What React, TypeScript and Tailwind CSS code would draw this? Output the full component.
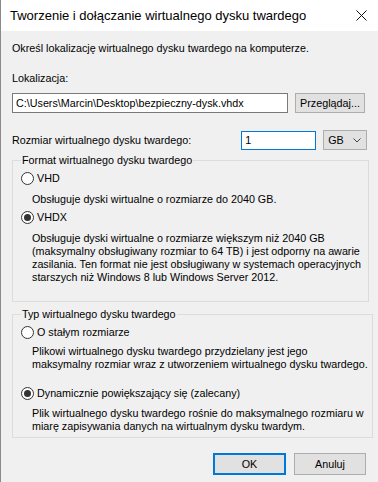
import React, { useState } from 'react';

const font = { fontFamily: '"Liberation Sans", Arial, sans-serif' };

// Classic Windows radio button
const Radio = ({ checked, label, onSelect }: { checked: boolean; label: string; onSelect: () => void }) => (
  <button type="button" onClick={onSelect} className="flex items-center h-[15px] text-left">
    <span className="w-[13px] h-[13px] rounded-full border border-[#333333] bg-white flex items-center justify-center shrink-0">
      {checked && <span className="w-[7px] h-[7px] rounded-full bg-[#333333]" />}
    </span>
    <span className="ml-[3px]">{label}</span>
  </button>
);

const GroupBox = ({ title, className, children }: { title: string; className: string; children: React.ReactNode }) => (
  <fieldset className={`border border-[#dcdcdc] pl-[8px] pr-1 ${className}`}>
    <legend className="px-[1px] leading-[15px]">{title}</legend>
    {children}
  </fieldset>
);

const App = () => {
  const [format, setFormat] = useState<'vhd' | 'vhdx'>('vhdx');
  const [type, setType] = useState<'fixed' | 'dynamic'>('dynamic');
  const [path, setPath] = useState('C:\\Users\\Marcin\\Desktop\\bezpieczny-dysk.vhdx');
  const [size, setSize] = useState('1');

  return (
    <div style={font} className="w-[378px] h-[482px] bg-[#f0f0f0] border-l border-[#8a8a8a] text-[10.75px] text-black overflow-hidden">
      {/* title bar */}
      <div className="h-[31px] bg-white flex items-center pl-[9px] pr-[10px]">
        <span className="text-[13px] flex-1">Tworzenie i dołączanie wirtualnego dysku twardego</span>
        <svg width="11" height="11" viewBox="0 0 11 11" className="mr-[1px]">
          <path d="M0.5 0.5 L10.5 10.5 M10.5 0.5 L0.5 10.5" stroke="#111" strokeWidth="1" />
        </svg>
      </div>

      <div className="px-[11px]">
        <p className="mt-[10px] leading-[15px]">Określ lokalizację wirtualnego dysku twardego na komputerze.</p>

        <p className="mt-[15px] leading-[15px]">Lokalizacja:</p>
        <div className="mt-[7px] flex items-center">
          <input
            value={path}
            onChange={(e) => setPath(e.target.value)}
            className="w-[276px] h-[20px] bg-white border border-[#7a7a7a] px-[3px] outline-none"
            style={font}
          />
          <button className="ml-[7px] w-[70px] h-[20px] bg-[#e1e1e1] border border-[#adadad]">Przeglądaj...</button>
        </div>

        <div className="mt-[17px] flex items-center">
          <span className="w-[231px]">Rozmiar wirtualnego dysku twardego:</span>
          <input
            value={size}
            onChange={(e) => setSize(e.target.value)}
            className="w-[75px] h-[19px] bg-white border border-[#0078d7] px-[3px] outline-none"
            style={font}
          />
          <div className="ml-[7px] w-[44px] h-[20px] bg-[#e1e1e1] border border-[#adadad] flex items-center justify-between pl-[4px] pr-[5px]">
            <span>GB</span>
            <svg width="8" height="5" viewBox="0 0 8 5">
              <path d="M0.5 0.5 L4 4 L7.5 0.5" stroke="#444" strokeWidth="1" fill="none" />
            </svg>
          </div>
        </div>

        <GroupBox title="Format wirtualnego dysku twardego" className="mt-[3px] w-[357px] pb-[17px]">
          <div className="mt-[3px]">
            <Radio checked={format === 'vhd'} label="VHD" onSelect={() => setFormat('vhd')} />
          </div>
          <p className="mt-[6px] pl-[11px] leading-[15px]">Obsługuje dyski wirtualne o rozmiarze do 2040 GB.</p>
          <div className="mt-[3px]">
            <Radio checked={format === 'vhdx'} label="VHDX" onSelect={() => setFormat('vhdx')} />
          </div>
          <p className="mt-[7px] pl-[11px] leading-[13px] whitespace-nowrap">
            Obsługuje dyski wirtualne o rozmiarze większym niż 2040 GB<br />
            (maksymalny obsługiwany rozmiar to 64 TB) i jest odporny na awarie<br />
            zasilania. Ten format nie jest obsługiwany w systemach operacyjnych<br />
            starszych niż Windows 8 lub Windows Server 2012.
          </p>
        </GroupBox>

        <GroupBox title="Typ wirtualnego dysku twardego" className="mt-[5px] w-[357px] pb-[4px]">
          <div className="mt-[3px]">
            <Radio checked={type === 'fixed'} label="O stałym rozmiarze" onSelect={() => setType('fixed')} />
          </div>
          <p className="mt-[5px] pl-[11px] leading-[12.5px] whitespace-nowrap">
            Plikowi wirtualnego dysku twardego przydzielany jest jego<br />
            maksymalny rozmiar wraz z utworzeniem wirtualnego dysku twardego.
          </p>
          <div className="mt-[16px]">
            <Radio checked={type === 'dynamic'} label="Dynamicznie powiększający się (zalecany)" onSelect={() => setType('dynamic')} />
          </div>
          <p className="mt-[6px] pl-[11px] leading-[13px] whitespace-nowrap">
            Plik wirtualnego dysku twardego rośnie do maksymalnego rozmiaru w<br />
            miarę zapisywania danych na wirtualnym dysku twardym.
          </p>
        </GroupBox>

        <div className="mt-[15px] flex justify-end pr-[1px]">
          <button className="w-[73px] h-[22px] bg-[#e1e1e1] border border-[#0078d7] shadow-[inset_0_0_0_1px_#0078d7]">OK</button>
          <button className="ml-[8px] w-[72px] h-[22px] bg-[#e1e1e1] border border-[#adadad]">Anuluj</button>
        </div>
      </div>
    </div>
  );
};

export default App;
